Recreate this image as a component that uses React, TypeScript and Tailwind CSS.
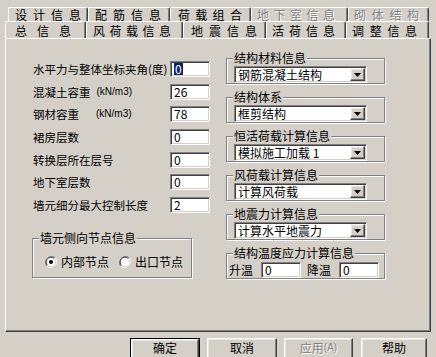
import React from "react";

const row1 = [
  { label: "设计信息", w: "w-[80px]", tr: "tracking-[6px]", pl: "pl-[6px]", off: false },
  { label: "配筋信息", w: "w-[82px]", tr: "tracking-[6px]", pl: "pl-[6px]", off: false },
  { label: "荷载组合", w: "w-[81px]", tr: "tracking-[5.3px]", pl: "pl-[7px]", off: false },
  { label: "地下室信息", w: "w-[97px]", tr: "tracking-[4.5px]", pl: "pl-[5px]", off: true },
  { label: "砌体结构", w: "w-[81px]", tr: "tracking-[5.7px]", pl: "pl-[5px]", off: true },
];

const row2 = [
  { label: "总信息", w: "w-[81px]", tr: "tracking-[10px]", pl: "pl-[9px]" },
  { label: "风荷载信息", w: "w-[97px]", tr: "tracking-[4.5px]", pl: "pl-[6px]" },
  { label: "地震信息", w: "w-[83px]", tr: "tracking-[6px]", pl: "pl-[7px]" },
  { label: "活荷信息", w: "w-[80px]", tr: "tracking-[5px]", pl: "pl-[5px]" },
  { label: "调整信息", w: "w-[83px]", tr: "tracking-[5.7px]", pl: "pl-[5px]" },
];

const fields = [
  { label: "水平力与整体坐标夹角(度)", value: "0", sel: true },
  { label: "混凝土容重", unit: "(kN/m3)", value: "26" },
  { label: "钢材容重", unit: "(kN/m3)", value: "78" },
  { label: "裙房层数", value: "0" },
  { label: "转换层所在层号", value: "0" },
  { label: "地下室层数", value: "0" },
  { label: "墙元细分最大控制长度", value: "2" },
];

const combos = [
  { title: "结构材料信息", value: "钢筋混凝土结构" },
  { title: "结构体系", value: "框剪结构" },
  { title: "恒活荷载计算信息", value: "模拟施工加载 1" },
  { title: "风荷载计算信息", value: "计算风荷载" },
  { title: "地震力计算信息", value: "计算水平地震力" },
];

const sunken =
  "border border-t-[#808080] border-l-[#808080] border-b-white border-r-white bg-white shadow-[inset_1px_1px_0_#404040,inset_-1px_-1px_0_#d4d0c8]";
const raised =
  "border border-t-white border-l-white border-r-[#404040] border-b-[#404040] bg-[#d4d0c8] shadow-[inset_-1px_-1px_0_#808080,inset_1px_1px_0_#e8e6e0]";
const disabled = "text-[#808080] [text-shadow:1px_1px_0_#fff]";
const tabCls =
  "flex shrink-0 items-center overflow-hidden whitespace-nowrap rounded-t-[2px] border-l border-t border-r border-l-white border-t-white border-r-[#404040] shadow-[inset_-1px_0_0_#808080] leading-[14px]";

function Input({ value, sel, w = "w-[40px]" }: { value: string; sel?: boolean; w?: string }) {
  return (
    <div className={`flex h-[16px] ${w} items-center pl-[3px] text-[12px] leading-[12px] ${sunken}`}>
      <span className={sel ? "bg-[#0a246a] px-[1px] text-white" : ""}>{value}</span>
    </div>
  );
}

function Combo({ value }: { value: string }) {
  return (
    <div className={`flex h-[17px] w-[133px] items-center pl-[3px] ${sunken}`}>
      <span className="flex-1 text-[12px] leading-[14px]">{value}</span>
      <span className={`mr-[1px] flex h-[13px] w-[15px] items-center justify-center ${raised}`}>
        <svg width="7" height="4" viewBox="0 0 7 4">
          <path d="M0 0h7L3.5 4z" fill="#000" />
        </svg>
      </span>
    </div>
  );
}

function Group({ title, children, cls }: { title: string; children: React.ReactNode; cls: string }) {
  return (
    <div className={`relative border border-[#808080] shadow-[inset_1px_1px_0_#fff,1px_1px_0_#fff] ${cls}`}>
      <span className="absolute -top-[8px] left-[6px] bg-[#d4d0c8] px-[1px] text-[12px] leading-[14px]">{title}</span>
      {children}
    </div>
  );
}

function Radio({ on }: { on?: boolean }) {
  return (
    <svg width="12" height="12" viewBox="0 0 12 12">
      <circle cx="6" cy="6" r="5" fill="#fff" />
      <path d="M1.8 10.2A6 6 0 0 1 10.2 1.8" fill="none" stroke="#808080" strokeWidth="1" />
      <path d="M2.6 9.4A4.8 4.8 0 0 1 9.4 2.6" fill="none" stroke="#404040" strokeWidth="1" />
      <path d="M10.2 1.8A6 6 0 0 1 1.8 10.2" fill="none" stroke="#fff" strokeWidth="1" />
      <path d="M9.4 2.6A4.8 4.8 0 0 1 2.6 9.4" fill="none" stroke="#d4d0c8" strokeWidth="1" />
      {on && <circle cx="6" cy="6" r="2" fill="#000" />}
    </svg>
  );
}

function Btn({ label, w, def, off }: { label: React.ReactNode; w: string; def?: boolean; off?: boolean }) {
  return (
    <div className={`${w} h-[23px] ${def ? "border border-black" : ""}`}>
      <div className={`flex h-full items-center justify-center pb-[4px] text-[12px] leading-[14px] ${raised} ${off ? disabled : ""}`}>
        {label}
      </div>
    </div>
  );
}

export default function App() {
  return (
    <div className="h-[357px] w-[436px] overflow-hidden bg-[#d4d0c8] font-['Noto_Sans_CJK_SC',sans-serif] text-[12px] text-black">
      {/* tab rows */}
      <div className="flex pl-[8px] pt-[7px]">
        {row1.map((t) => (
          <div key={t.label} className={`${tabCls} h-[14px] ${t.w} ${t.pl} ${t.tr} ${t.off ? disabled : ""}`}>
            {t.label}
          </div>
        ))}
      </div>
      <div className="flex pl-[5px]">
        {row2.map((t) => (
          <div key={t.label} className={`${tabCls} h-[17px] ${t.w} pt-[1px] ${t.pl} ${t.tr}`}>
            {t.label}
          </div>
        ))}
      </div>

      {/* panel */}
      <div className="ml-[5px] flex h-[294px] w-[426px] border border-t-white border-l-white border-r-[#404040] border-b-[#404040] shadow-[inset_-1px_-1px_0_#808080]">
        <div className="w-[204px] pl-[27px] pt-[18.6px]">
          {fields.map((f) => (
            <div key={f.label} className="flex h-[22.7px] items-center">
              <span className="flex w-[137px] items-center whitespace-nowrap text-[11.5px] leading-[14px]">
                {f.label}
                {f.unit && (
                  <span className={`font-['Liberation_Sans',sans-serif] text-[10px] ${f.label.length === 5 ? "ml-[6px]" : "ml-[17px]"}`}>
                    {f.unit}
                  </span>
                )}
              </span>
              <Input value={f.value} sel={f.sel} />
            </div>
          ))}
          <Group title="墙元侧向节点信息" cls="ml-[-1px] mt-[21.5px] h-[40px] w-[160px]">
            <div className="flex items-center pl-[12px] pt-[16px] text-[12px] leading-[14px]">
              <Radio on />
              <span className="ml-[4px]">内部节点</span>
              <span className="ml-[10px] flex">
                <Radio />
              </span>
              <span className="ml-[4px]">出口节点</span>
            </div>
          </Group>
        </div>

        <div className="ml-[16px] flex flex-col gap-[13px] pt-[19px]">
          {combos.map((c) => (
            <Group key={c.title} title={c.title} cls="h-[26px] w-[159px] pl-[7px] pt-[7px]">
              <Combo value={c.value} />
            </Group>
          ))}
          <Group title="结构温度应力计算信息" cls="h-[26px] w-[159px] pl-[2px] pt-[8px]">
            <div className="flex items-center leading-[14px]">
              <span>升温</span>
              <span className="ml-[8px]">
                <Input value="0" />
              </span>
              <span className="ml-[6px]">降温</span>
              <span className="ml-[8px]">
                <Input value="0" />
              </span>
            </div>
          </Group>
        </div>
      </div>

      {/* buttons */}
      <div className="ml-[130px] mt-[6px] flex">
        <Btn label="确定" w="w-[70px]" def />
        <span className="ml-[7px]">
          <Btn label="取消" w="w-[70px]" />
        </span>
        <span className="ml-[7px]">
          <Btn
            label={
              <>
                应用<span className="font-['Liberation_Sans',sans-serif] text-[10px]">(A)</span>
              </>
            }
            w="w-[69px]"
            off
          />
        </span>
        <span className="ml-[8px]">
          <Btn label="帮助" w="w-[66px]" />
        </span>
      </div>
    </div>
  );
}
